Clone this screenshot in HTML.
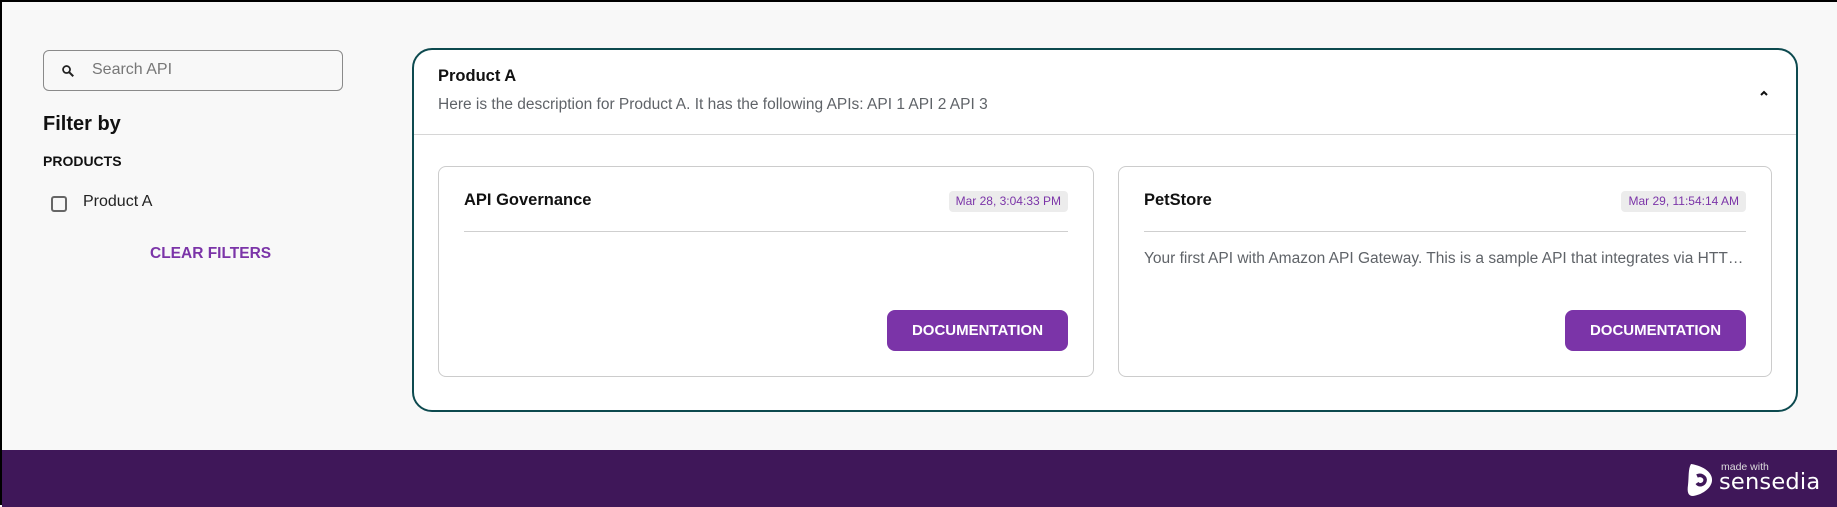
<!DOCTYPE html>
<html><head><meta charset="utf-8"><style>
*{box-sizing:border-box;margin:0;padding:0}
body{width:1837px;height:505px;overflow:hidden;background:#f8f8f8;font-family:"Liberation Sans",Roboto,sans-serif;position:relative;border:2px solid #000;border-right:none}
.abs{position:absolute}
.search{left:41px;top:48px;width:300px;height:41px;border:1.5px solid #8a8a8a;border-radius:6px;background:#f8f8f8}
.search span{position:absolute;left:48px;top:10px;font-size:16px;color:#777}
.panel{left:410px;top:46px;width:1386px;height:364px;border:2.5px solid #0d4a4f;border-radius:20px;background:#fff;overflow:hidden}
.card{top:116px;height:211px;border:1px solid #ccc;border-radius:8px;background:#fff}
.ct{position:absolute;left:25px;top:24px;font-size:16.5px;font-weight:bold;color:#111}
.chip{position:absolute;top:24px;height:21px;background:#ececec;border-radius:4px;color:#7b34a8;font-size:12px;line-height:21px;padding:0 7px;white-space:nowrap}
.dv{position:absolute;left:25px;right:25px;top:64px;border-top:1.5px solid #cfcfcf}
.btn{position:absolute;right:25px;top:143px;width:181px;height:41px;background:#7b34a8;border-radius:8px;color:#fff;font-weight:bold;font-size:15px;text-align:center;line-height:41px}
</style></head><body>
<div class="abs search">
<svg class="abs" style="left:17px;top:13px" width="14" height="14" viewBox="0 0 24 24"><circle cx="9.5" cy="9.5" r="6" fill="none" stroke="#222" stroke-width="3"/><path d="M14 14l7 7" stroke="#222" stroke-width="3.5"/></svg>
<span>Search API</span></div>
<div class="abs" style="left:41px;top:111px;font-size:20px;font-weight:bold;color:#111">Filter by</div>
<div class="abs" style="left:41px;top:151px;font-size:14px;font-weight:bold;color:#111">PRODUCTS</div>
<div class="abs" style="left:49px;top:194px;width:16px;height:16px;border:2px solid #666;border-radius:3px"></div>
<div class="abs" style="left:81px;top:191px;font-size:16px;color:#222">Product A</div>
<div class="abs" style="left:148px;top:243px;font-size:15.5px;font-weight:bold;color:#7b34a8">CLEAR FILTERS</div>

<div class="abs panel">
<div class="abs" style="left:24px;top:17px;font-size:16.5px;font-weight:bold;color:#111">Product A</div>
<div class="abs" style="left:24px;top:46px;font-size:15.5px;color:#5f6368">Here is the description for Product A. It has the following APIs: API 1 API 2 API 3</div>
<svg class="abs" style="left:1344px;top:38px" width="12" height="10" viewBox="0 0 12 10"><path d="M3 7l3-3 3 3" fill="none" stroke="#111" stroke-width="2"/></svg>
<div class="abs" style="left:0;right:0;top:84px;border-top:1.5px solid #d6d6d6"></div>
<div class="abs card" style="left:24px;width:656px">
<div class="ct">API Governance</div><div class="chip" style="right:25px">Mar 28, 3:04:33 PM</div><div class="dv"></div>
<div class="btn">DOCUMENTATION</div></div>
<div class="abs card" style="left:704px;width:654px">
<div class="ct">PetStore</div><div class="chip" style="right:25px">Mar 29, 11:54:14 AM</div><div class="dv"></div>
<div class="abs" style="left:25px;right:25px;top:83px;font-size:15.5px;color:#5f6368;white-space:nowrap;overflow:hidden;text-overflow:ellipsis">Your first API with Amazon API Gateway. This is a sample API that integrates via HTTP with our demo Pet Store endpoints</div>
<div class="btn">DOCUMENTATION</div></div>
</div>

<div class="abs" style="left:0;right:0;top:448px;height:57px;background:#3f1759">
<svg class="abs" style="left:1685px;top:13px" width="27" height="34" viewBox="0 0 27 34"><path d="M4 1C17 3 26 10 25 18 24 26 14 32 6 33 1 33 0 29 1 22 2 14 1 6 4 1Z" fill="#fff"/><path d="M10 13c4-2 9 1 8 5-1 4-6 5-8 2" fill="none" stroke="#3f1759" stroke-width="3.5"/></svg>
<div class="abs" style="left:1719px;top:11px;font-size:10.5px;color:#ddd">made with</div>
<div class="abs" style="left:1717px;top:19px;font-size:22.5px;color:#fff;font-family:'DejaVu Sans',sans-serif;letter-spacing:0.2px">sensedia</div>
</div>
</body></html>
